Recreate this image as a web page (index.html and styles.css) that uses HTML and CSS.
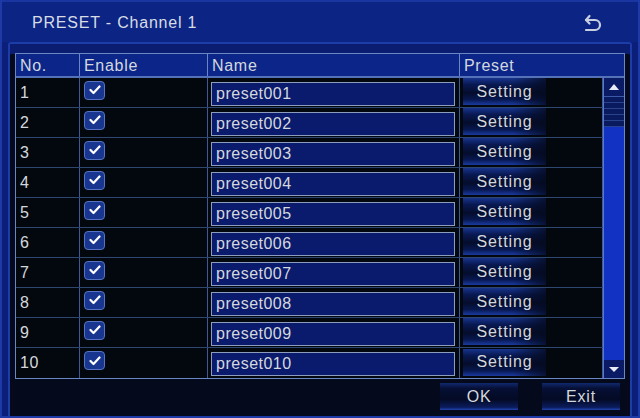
FILE: index.html
```html
<!DOCTYPE html>
<html lang="en">
<head>
    <meta charset="UTF-8">
    <title>PRESET - Channel 1</title>
    <link rel="stylesheet" href="styles.css">
</head>
<body>
    <div class="window">
        <div class="title-bar">
            <span class="title">PRESET - Channel 1</span>
            <svg class="back-icon" width="22" height="18" viewBox="0 0 22 18">
                <path d="M4 6 H13 A5 5 0 0 1 13 16 H4" fill="none" stroke="#c8d0e0" stroke-width="2.2" stroke-linecap="round"/>
                <path d="M7.5 2 L4 6 L7.5 9.5" fill="none" stroke="#c8d0e0" stroke-width="2.2" stroke-linecap="round" stroke-linejoin="round"/>
            </svg>
        </div>

        <div class="panel">
            <div class="table">
                <div class="head">
                    <div class="cell">No.</div>
                    <div class="cell">Enable</div>
                    <div class="cell">Name</div>
                    <div class="cell last">Preset</div>
                </div>
                <div class="body">
                    <div class="rows" id="rows"></div>
                    <div class="scrollbar">
                        <div class="scroll-btn"><span class="arrow-up"></span></div>
                        <div class="thumb"></div>
                        <div class="track"></div>
                        <div class="scroll-btn"><span class="arrow-down"></span></div>
                    </div>
                </div>
            </div>

            <div class="footer">
                <button class="btn">OK</button>
                <button class="btn">Exit</button>
            </div>
        </div>
    </div>

    <script>
        var rows = document.getElementById('rows');
        for (var i = 1; i <= 10; i++) {
            var num = ('00' + i).slice(-3);
            var row = document.createElement('div');
            row.className = 'row';
            row.innerHTML =
                '<div class="cell">' + i + '</div>' +
                '<div class="cell"><span class="check"><svg width="12" height="10" viewBox="0 0 12 10"><path d="M1.5 5 L4.5 8 L10.5 1.5" fill="none" stroke="#fff" stroke-width="2.2" stroke-linecap="round" stroke-linejoin="round"/></svg></span></div>' +
                '<div class="cell"><span class="name-input">preset' + num + '</span></div>' +
                '<div class="cell last"><span class="setting">Setting</span></div>';
            rows.appendChild(row);
        }
    </script>
</body>
</html>
```

FILE: styles.css
```css
body {
    margin: 0;
    background: #06124a;
    font-family: "Liberation Sans", Arial, sans-serif;
    color: #d4d8de;
}
.window {
    width: 636px;
    height: 416px;
    background: #0b1f78;
    border-left: 2px solid #1d3aa6;
    border-right: 2px solid #1d3aa6;
    border-bottom: 2px solid #1d3aa6;
    overflow: hidden;
}
.title-bar {
    height: 40px;
    border-top: 2px solid #1a36a0;
    background: #0c2584;
    display: flex;
    align-items: center;
    justify-content: space-between;
    padding: 0 34px 0 30px;
}
.title {
    font-size: 16px;
    letter-spacing: 0.8px;
    color: #d8dce4;
    margin-top: 2px;
}
.back-icon {
    margin-top: 1px;
}
.panel {
    margin: 0 6px;
    height: 364px;
    border: 2px solid #1c3ca8;
    border-radius: 3px;
    background: #040a1c;
    padding: 9px 5px 0 5px;
    box-shadow: inset 0 10px 0 #0a1d70;
}
.table {
    border: 1px solid #6a86c4;
    background: #03080e;
}
.head {
    display: grid;
    grid-template-columns: 64px 128px 252px 1fr;
    height: 22px;
    background: #0b2688;
    border-bottom: 2px solid #5572b8;
}
.cell {
    border-right: 1px solid #3e5a90;
    display: flex;
    align-items: center;
    padding-left: 4px;
    font-size: 16px;
    letter-spacing: 0.7px;
    box-sizing: border-box;
}
.head .cell {
    border-right-color: #6a86c4;
    padding-top: 1px;
}
.cell.last {
    border-right: none;
}
.body {
    display: flex;
}
.rows {
    flex: 1;
}
.row {
    display: grid;
    grid-template-columns: 64px 128px 252px 1fr;
    height: 30px;
    border-bottom: 1px solid #2e4670;
    box-sizing: border-box;
}
.row:last-child {
    border-bottom: none;
}
.row .cell.last {
    border-right: 1px solid #3e5a90;
    padding-left: 3px;
}
.check {
    width: 19px;
    height: 17px;
    border: 1px solid #5674c2;
    border-radius: 4px;
    background: #183590;
    display: flex;
    align-items: center;
    justify-content: center;
    margin-top: -5px;
}
.row .cell:nth-child(3) {
    padding-left: 3px;
}
.name-input {
    width: 244px;
    border: 1px solid #8b9cbc;
    background: #0a1a6c;
    display: flex;
    align-items: center;
    padding-left: 4px;
    box-sizing: border-box;
    height: 24px;
    margin-top: 2px;
    letter-spacing: 0.5px;
}
.setting {
    width: 83px;
    height: 27px;
    display: flex;
    align-items: center;
    justify-content: center;
    font-size: 16px;
    letter-spacing: 0.9px;
    background:
        linear-gradient(to right, rgba(4, 10, 30, 0) 60%, rgba(4, 10, 30, 0.8) 100%),
        linear-gradient(to bottom, #17348e 0, #081850 25%, #050d2c 55%, #081850 80%, #1a3aa0 100%);
    margin-top: -2px;
}
.scrollbar {
    width: 20px;
    background: #1232c4;
    border-left: 1px solid #5a78d0;
    display: flex;
    flex-direction: column;
}
.scroll-btn {
    height: 18px;
    background: #0a1a64;
    display: flex;
    align-items: center;
    justify-content: center;
}
.thumb {
    height: 30px;
    background: repeating-linear-gradient(to bottom, #0a1a5e 0, #0a1a5e 5px, #2a428c 5px, #2a428c 6px);
    border-top: 1px solid #3a58a8;
}
.track {
    flex: 1;
}
.arrow-up {
    border-left: 5px solid transparent;
    border-right: 5px solid transparent;
    border-bottom: 6px solid #e8ecf4;
}
.arrow-down {
    border-left: 5px solid transparent;
    border-right: 5px solid transparent;
    border-top: 5px solid #e8ecf4;
}
.footer {
    display: flex;
    justify-content: flex-end;
    gap: 24px;
    padding: 4px 5px 0 0;
}
.btn {
    width: 78px;
    height: 27px;
    border: none;
    font-family: "Liberation Sans", Arial, sans-serif;
    font-size: 16px;
    letter-spacing: 0.8px;
    color: #d4d8de;
    background:
        linear-gradient(to bottom, #10286e 0, #061036 20%, #040a24 60%, #0a1c5c 90%, #2244b0 100%);
    padding: 0;
}
```
